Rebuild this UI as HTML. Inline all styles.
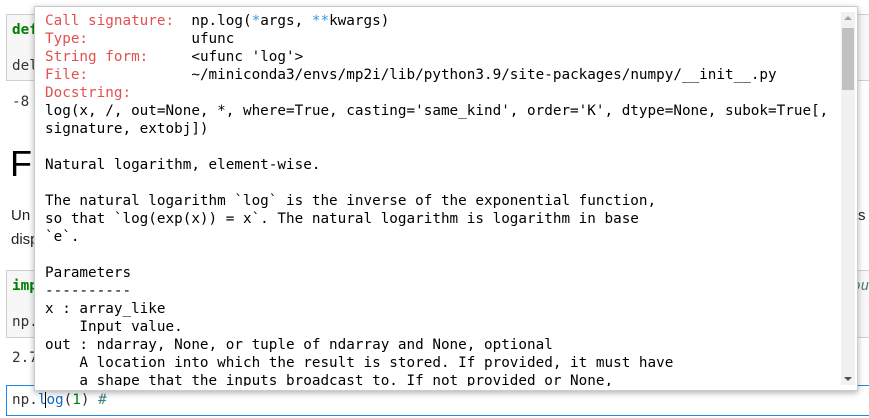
<!DOCTYPE html>
<html><head><meta charset="utf-8"><style>
body{margin:0;width:869px;height:418px;background:#fff;position:relative;overflow:hidden;font-family:"Liberation Sans",sans-serif;}
.m{font-family:"DejaVu Sans Mono",monospace;font-size:14.3px;white-space:pre;position:absolute;line-height:18px;}
.cell{position:absolute;left:6px;right:-5px;background:#f7f7f7;border:1px solid #cfcfcf;}
.t{position:absolute;font-size:14px;color:#222;}
#tip{position:absolute;left:34px;top:6px;width:822px;height:383px;background:#fff;border:1px solid #ccc;box-shadow:0 2px 6px rgba(0,0,0,.3);overflow:hidden}
.r{color:#e25050}.b{color:#3399ee}
</style></head><body>
<div class="cell" style="top:14px;height:65px"></div>
<div class="m" style="left:12px;top:21px;color:#008000;font-weight:bold">def</div>
<div class="m" style="left:12px;top:57px;color:#333">del</div>
<div class="m" style="left:12px;top:93px;color:#333">-8</div>
<div class="t" style="left:10px;top:143px;font-size:36px;color:#000">F</div>
<div class="t" style="left:11px;top:207px;font-size:15px">Un</div>
<div class="t" style="left:11px;top:231px;font-size:15px">disp</div>
<div class="t" style="left:858px;top:207px;font-size:15px">s</div>
<div class="cell" style="top:270px;height:66px"></div>
<div class="m" style="left:12px;top:277px;color:#008000;font-weight:bold">imp</div>
<div class="m" style="left:852px;top:277px;color:#408080;font-style:italic">ou</div>
<div class="m" style="left:12px;top:313px;color:#333">np.</div>
<div class="m" style="left:12px;top:349px;color:#333">2.7</div>
<div style="position:absolute;left:6px;right:-5px;top:385px;height:29px;border:1px solid #1e88e5;background:#fff"></div>
<div class="m" style="left:12px;top:391px;color:#333">np.<span style="color:#1565c0">l</span><span style="border-left:1px solid #000;margin-left:-1px"></span><span style="color:#1565c0">og</span>(<span style="color:#008000">1</span>) <span style="color:#408080">#</span></div>
<div id="tip">
<div style="position:absolute;left:0;top:0;width:805px;height:379px;overflow:hidden">
<div class="m" style="left:10px;top:5px"><span class="r">Call signature:</span>  np.log(<span class="b">*</span>args, <span class="b">**</span>kwargs)
<span class="r">Type:</span>            ufunc
<span class="r">String form:</span>     &lt;ufunc 'log'&gt;
<span class="r">File:</span>            ~/miniconda3/envs/mp2i/lib/python3.9/site-packages/numpy/__init__.py
<span class="r">Docstring:</span>
log(x, /, out=None, *, where=True, casting='same_kind', order='K', dtype=None, subok=True[,
signature, extobj])

Natural logarithm, element-wise.

The natural logarithm `log` is the inverse of the exponential function,
so that `log(exp(x)) = x`. The natural logarithm is logarithm in base
`e`.

Parameters
----------
x : array_like
    Input value.
out : ndarray, None, or tuple of ndarray and None, optional
    A location into which the result is stored. If provided, it must have
    a shape that the inputs broadcast to. If not provided or None,</div>
</div>
<div style="position:absolute;left:806px;top:5px;width:14px;height:373px;background:#f1f1f1"></div>
<div style="position:absolute;left:807px;top:21px;width:12px;height:62px;background:#c1c1c1"></div>
<div style="position:absolute;left:809px;top:9px;width:0;height:0;border-left:4px solid transparent;border-right:4px solid transparent;border-bottom:4px solid #a3a3a3"></div>
<div style="position:absolute;left:809px;top:370px;width:0;height:0;border-left:4px solid transparent;border-right:4px solid transparent;border-top:4px solid #505050"></div>
</div>
</body></html>
